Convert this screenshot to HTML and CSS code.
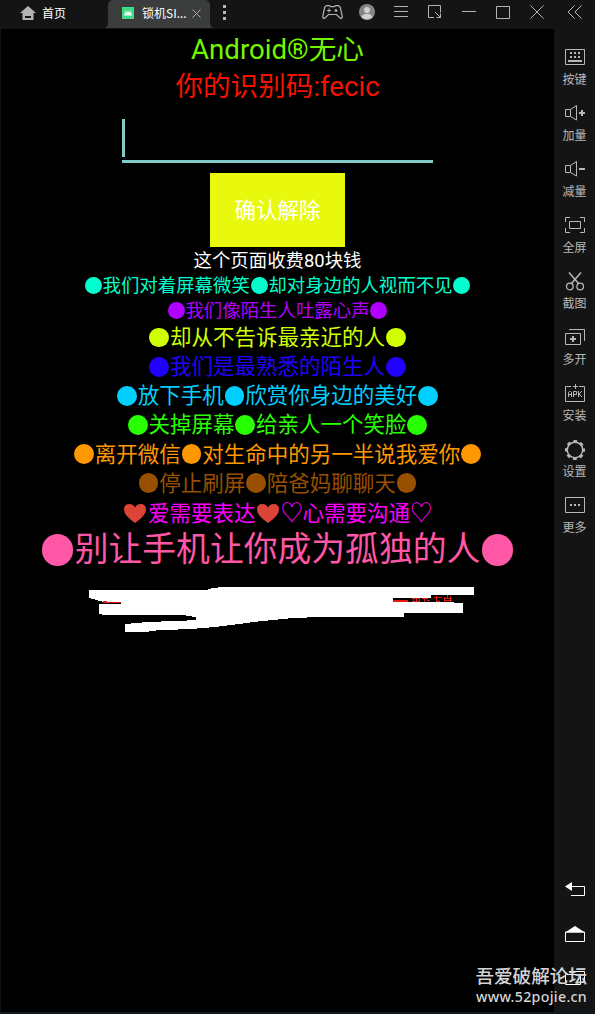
FILE: index.html
```html
<!DOCTYPE html>
<html lang="zh-CN">
<head>
<meta charset="utf-8">
<title>锁机</title>
<link rel="stylesheet" href="styles.css">
</head>
<body>
<div class="window">
  <div class="main">
    <header class="titlebar">
      <div class="home">
        <svg width="16" height="14" viewBox="0 0 16 14"><path fill="#b4b4b4" fill-rule="evenodd" d="M8 0 16 7H13.500V14H2.500V7H0ZM5 10v2h6v-2Z"/></svg>
        <span>首页</span>
      </div>
      <div class="tab">
        <svg class="android" width="12" height="12" viewBox="0 0 12 12"><rect width="12" height="12" fill="#3ddc84"/><path d="M2 8.600a4 3.900 0 0 1 8 0z" fill="#fff"/><path d="M3.200 3.400 4.300 5M8.800 3.400 7.700 5" stroke="#fff" stroke-width=".7"/><path d="M4 6.700h.8M7.200 6.700H8" stroke="#3ddc84" stroke-width=".7"/></svg>
        <span class="tab-title">锁机SI...</span>
        <svg class="tab-close" width="9" height="9" viewBox="0 0 9 9"><path d="M.5.5l8 8M8.500.5l-8 8" stroke="#aaa"/></svg>
      </div>
      <svg class="dots" width="4" height="16" viewBox="0 0 4 16" fill="#b8b8b8"><path d="M0 0h3v3H0zM0 6h3v3H0zM0 12h3v3H0z"/></svg>
      <svg class="tools" width="234" height="28" viewBox="0 0 234 28" fill="none" stroke="#b4b4b4">
        <path stroke-width="1.200" d="M6.500 5.600h3l1 1h4l1-1h3l1.800 1.800 1.900 8.600q.3 2.400-1.700 2.400L16.500 14.500h-8l-4 3.900q-2 0-1.700-2.400L4.700 7.400Z"/>
        <path d="M7 10.500h4M9 8.500v4"/><circle cx="16" cy="10.500" r="1" fill="#b4b4b4"/>
        <circle cx="47" cy="12" r="8" fill="#858585" stroke="none"/><circle cx="47" cy="10" r="3" fill="#d0d0d0" stroke="none"/><path d="M41.700 17.400Q42 13.800 47 13.800T52.300 17.400Q47 21.500 41.700 17.400Z" fill="#d0d0d0" stroke="none"/>
        <path d="M74 6.500h14M74 11.500h14M74 16.500h14"/>
        <path d="M114 17.500h-5.500v-12h12v7M115 12l5.500 5.500M116.500 17.500h4v-4"/>
        <path d="M142 11.500h14M176.500 6.500h13v12h-13zM210.500 5.500l13 13M223.500 5.500l-13 13"/>
      </svg>
    </header>
    <main class="screen">
      <h1 class="name">Android®无心</h1>
      <p class="code">你的识别码:fecic</p>
      <div class="field"><i class="caret"></i></div>
      <button class="confirm">确认解除</button>
      <p class="row small white">这个页面收费80块钱</p>
      <p class="row small mint"><b></b>我们对着屏幕微笑<b></b>却对身边的人视而不见<b></b></p>
      <p class="row small purple"><b></b>我们像陌生人吐露心声<b></b></p>
      <p class="row yellow"><b></b>却从不告诉最亲近的人<b></b></p>
      <p class="row blue"><b></b>我们是最熟悉的陌生人<b></b></p>
      <p class="row cyan"><b></b>放下手机<b></b>欣赏你身边的美好<b></b></p>
      <p class="row green"><b></b>关掉屏幕<b></b>给亲人一个笑脸<b></b></p>
      <p class="row orange"><b></b>离开微信<b></b>对生命中的另一半说我爱你<b></b></p>
      <p class="row brown"><b></b>停止刷屏<b></b>陪爸妈聊聊天<b></b></p>
      <p class="row magenta"><svg class="heart" viewBox="0 0 24 22"><path d="M12 20Q1 12.500 1 6.500Q1 1 6.500 1 10.300 1 12 4.500 13.700 1 17.500 1 23 1 23 6.500 23 12.500 12 20Z"/></svg>爱需要表达<svg class="heart" viewBox="0 0 24 22"><path d="M12 20Q1 12.500 1 6.500Q1 1 6.500 1 10.300 1 12 4.500 13.700 1 17.500 1 23 1 23 6.500 23 12.500 12 20Z"/></svg><span class="outline">♡</span>心需要沟通<span class="outline">♡</span></p>
      <p class="row large pink"><b></b>别让手机让你成为孤独的人<b></b></p>
      <svg class="scribble" width="386" height="46" viewBox="89 587 386 46" shape-rendering="crispEdges">
        <path fill="#fff" d="M89 590H206L212 588 223 587H474V595H431V598H393V602.300H452L463 603.500V613H404V617H317L288 618.500 258 621.500 218 626.700 195 628.700 156 630.500 145 632H125V624L148 622 187 620.500 196 620V617L187 616 184 615H105L99 614V604H121V602H104L93 599 89 598Z"/>
        <path stroke="#e61a08" fill="none" d="M103 602.500h18M103 601.500h4M393 600.500h15M393 601.500h15M412 598.500h8M412 601.500h7M413 598v4M416 598v4M419 598v4M422 598.500h6M424 599v3M427 600.500h3M434 597.500h8M436 596v6M436 601.500h4M444 597v5M444 598.500h8M447 595v4M450 596v6M444 600.500h8"/>
      </svg>
    </main>
  </div>
  <aside class="sidebar">
    <svg class="collapse" width="16" height="14" viewBox="0 0 16 14"><path d="M7.500.5 1 7l6.500 6.500M14.500.5 8 7l6.500 6.500"/></svg>
    <div class="tool"><svg viewBox="0 0 20 20"><path d="M.5 2.500h19v15H.5z"/><path stroke-width="2" d="M5 6h2M9 6h2M13 6h2M5 10h2M9 10h2M13 10h2M3 14h14"/></svg><span>按键</span></div>
    <div class="tool"><svg viewBox="0 0 20 20"><path d="M5.500 6.500H.5v7h5L11.500 17V2.500L5.500 6.500v7"/><path stroke-width="2" d="M14 10h6M17 7v6"/></svg><span>加量</span></div>
    <div class="tool"><svg viewBox="0 0 20 20"><path d="M5.500 6.500H.5v7h5L11.500 17V2.500L5.500 6.500v7"/><path stroke-width="2" d="M14 10h6"/></svg><span>减量</span></div>
    <div class="tool"><svg viewBox="0 0 20 20"><path d="M5 2.500H.5V7M15 2.500h4.500V7M5 17.500H.5V13M15 17.500h4.500V13M4.500 6.500h11v7h-11z"/></svg><span>全屏</span></div>
    <div class="tool"><svg viewBox="0 0 20 20"><path stroke-width="1.500" d="M4 1.500 14 13M16 1.500 6 13"/><circle cx="4.800" cy="15.500" r="3.300" stroke-width="1.300"/><circle cx="15.200" cy="15.500" r="3.300" stroke-width="1.300"/></svg><span>截图</span></div>
    <div class="tool"><svg viewBox="0 0 20 20"><path d="M.5 6.500h15v11H.5zM4 2.500h15.500V14"/><path stroke-width="2" d="M5 12h6M8 9v6"/></svg><span>多开</span></div>
    <div class="tool"><svg viewBox="0 0 20 20"><path d="M6 3.500H.5v15h19v-15H14M10.500 1v5M8 3.500h5M3.500 14V9.500l1-1h1l1 1V14M3.500 11.500h3M8.500 14V8.500h3v3h-3M13.500 8v6M17 8l-3 3 3 3"/></svg><span>安装</span></div>
    <div class="tool"><svg class="gear" viewBox="0 0 20 20"><circle cx="10" cy="10" r="7.700" stroke-width="1.400"/><circle cx="10" cy="10" r="8.600" stroke-width="2.800" stroke-dasharray="3.600 3.154" stroke-dashoffset="1.800"/></svg><span>设置</span></div>
    <div class="tool"><svg viewBox="0 0 20 20"><path d="M.5 2.500h19v15H.5z"/><path stroke-width="2" d="M5 10h2M9 10h2M13 10h2"/></svg><span>更多</span></div>
    <nav class="keys">
      <svg viewBox="0 0 20 16"><path d="M6 4.500h13.500v9H6"/><path fill="#fff" stroke="none" d="M0 4.500 7 0v9z"/></svg>
      <svg viewBox="0 0 20 16"><path d="M.5 6h19v9.500H.5z"/><path fill="#fff" stroke="none" d="M0 6.500 10 0l10 6.500z"/></svg>
      <svg viewBox="0 0 20 16"><path d="M.5 4.500h15v10H.5zM4 1.500h15.500V11"/></svg>
    </nav>
  </aside>
  <div class="watermark"><div class="forum">吾爱破解论坛</div><div class="site">www.52pojie.cn</div></div>
</div>
</body>
</html>
```
FILE: styles.css
```css
* { box-sizing: border-box; }
body { margin: 0; background: #000; font-family: Roboto, "Noto Sans CJK SC", sans-serif; }
h1, p { margin: 0; font-weight: 400; }
svg { display: block; flex: none; }
.window { position: relative; display: flex; width: 595px; height: 1014px; overflow: hidden; border-left: 1px solid #10131a; border-bottom: 2px solid #10161d; }
.main { width: 553px; }
.titlebar { display: flex; height: 29px; background: #141414; color: #fff; font: 12px/26px "Noto Sans CJK SC", sans-serif; }
.home { display: flex; flex: none; gap: 6px; width: 107px; padding-left: 19px; }
.home svg { margin-top: 6px; }
.tab { position: relative; display: flex; flex: none; width: 102px; height: 28px; padding-left: 14px; background: #3b3d3d; border-radius: 5px 5px 0 0; }
.tab::before, .tab::after { content: ""; position: absolute; bottom: 0; width: 4px; height: 4px; }
.tab::before { left: -4px; background: radial-gradient(circle at 0 0, transparent 3.500px, #3b3d3d 4px); }
.tab::after { right: -4px; background: radial-gradient(circle at 100% 0, transparent 3.500px, #3b3d3d 4px); }
.android { margin: 7px 8px 0 0; }
.tab-title { width: 50px; white-space: nowrap; }
.tab-close { margin-top: 9px; }
.dots { margin: 5px 0 0 13px; }
.tools { margin-left: 93px; }
.screen { display: flex; flex-direction: column; align-items: center; height: 983px; background: #000; }
.name, .code { height: 37px; line-height: 40px; font-size: 27.600px; white-space: nowrap; }
.name { color: #73f500; height: 38px; line-height: 41px; }
.code { color: #f51200; }
.field { width: 311px; height: 59px; padding-top: 15px; border-bottom: 3px solid #80cbc4; }
.caret { display: block; width: 3px; height: 38px; background: #80cbc4; }
.confirm { width: 135px; height: 74px; margin: 10px 0 1px; padding: 0 0 3px; border: 0; background: #e9f90d; color: #fff; font: 21.500px/32px "Noto Sans CJK SC", sans-serif; }
.row { display: flex; align-items: center; justify-content: center; height: 29.150px; line-height: 29px; font-size: 21.500px; white-space: nowrap; }
.row b { width: .92em; height: .92em; margin: 0 .04em; border-radius: 50%; background: currentColor; }
.small { height: 25px; line-height: 25px; font-size: 18.430px; }
.large { height: 46px; line-height: 47px; font-size: 33.800px; }
.heart { width: 24px; height: 22px; fill: #db4437; margin-right: 1px; }
.outline { width: 21.500px; margin-right: 0.500px; font-size: 22.500px; text-align: center; }
.white { color: #fff; }
.mint { color: #00ffcf; }
.purple { color: #b000ff; }
.yellow { color: #d0ff00; }
.blue { color: #2000ff; }
.cyan { color: #00cfff; }
.green { color: #28ff00; }
.orange { color: #ff9800; }
.brown { color: #985000; }
.magenta { color: #f0f; padding-top: 3px; }
.pink { color: #ff57a6; }
.scribble { align-self: flex-start; margin: 14px 0 0 88px; }
.sidebar { display: flex; flex-direction: column; align-items: center; width: 41px; background: #141414; color: #b8b8b8; font: 12px/18px "Noto Sans CJK SC", sans-serif; }
.sidebar svg { fill: none; stroke: #b8b8b8; }
.collapse { margin: 5px 0 28px; }
.tool { display: flex; flex-direction: column; align-items: center; gap: 3px; height: 56px; }
.tool svg { width: 20px; height: 20px; margin-left: 1px; }
.tool .gear { margin: 1px 0 -1px 1px; overflow: visible; }
.keys { display: flex; flex-direction: column; gap: 28px; margin-top: 331px; }
.keys svg { width: 20px; height: 16px; stroke: #fff; }
.watermark { position: absolute; right: 8px; top: 963px; color: #d4d4d4; text-align: right; white-space: nowrap; }
.forum { font: 500 18.600px/24px "Noto Sans CJK SC", sans-serif; }
.site { margin-top: 1px; font: 500 14.200px/18px "Noto Sans", sans-serif; letter-spacing: .3px; }
```
